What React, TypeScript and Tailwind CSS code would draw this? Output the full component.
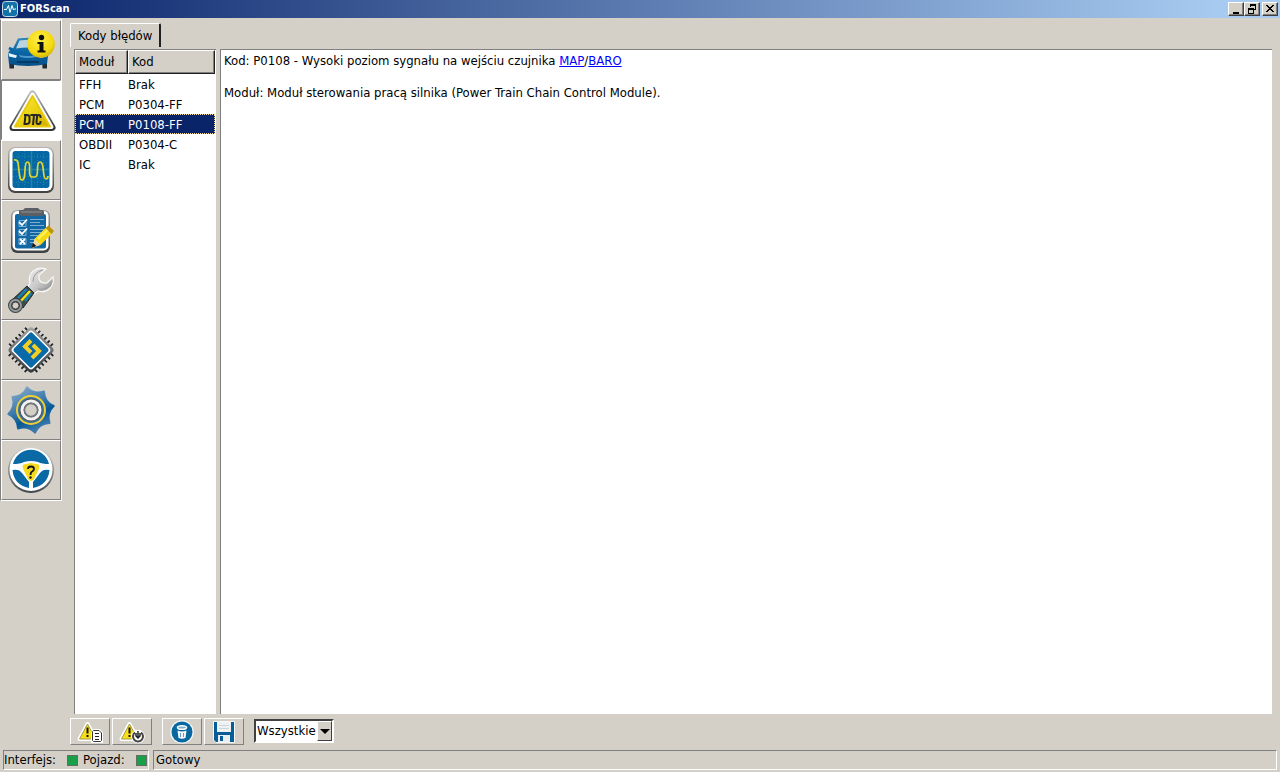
import { useState } from 'react';
import type { ReactNode } from 'react';

function CarIcon() {
  return (
    <svg viewBox="0 0 48 48" className="h-12 w-12 overflow-visible" aria-hidden="true">
      <defs>
        <linearGradient id="carBody" x1="0" y1="0" x2="0" y2="1">
          <stop offset="0" stopColor="#2f86bb" />
          <stop offset="0.5" stopColor="#0a66a6" />
          <stop offset="1" stopColor="#064f86" />
        </linearGradient>
        <radialGradient id="infoDisc" cx="0.45" cy="0.35" r="0.7">
          <stop offset="0" stopColor="#fff04a" />
          <stop offset="0.7" stopColor="#f4d80c" />
          <stop offset="1" stopColor="#c9ab06" />
        </radialGradient>
      </defs>
      <path d="M2 34h5v8.500h-4.500zM35 34h5v8.500h-4.500z" fill="#252b32" />
      <path d="M11 12.500Q22 11 33 12.500L37 23Q41 25 41 30L40 38Q21 42 2 38L1 29Q1 24 6 22.500Z" fill="url(#carBody)" />
      <path d="M12.500 14.500Q22 13 31 14.500L34 22.500Q21 20.500 9 22.500Z" fill="#bcd3e0" />
      <path d="M1.500 27L10 29.500L9 32L2 30.500ZM40.500 27L32 29.500L33 32L40 30.500Z" fill="#e9f4f8" />
      <path d="M12 29Q21 31 30 29L29 31Q21 33 13 31Z" fill="#4b9bcb" />
      <path d="M10 36H32" stroke="#043a66" strokeWidth="2" />
      <path d="M2 22L6 24" stroke="#0a66a6" strokeWidth="3" />
      <circle cx="34" cy="18" r="13.800" fill="url(#infoDisc)" />
      <circle cx="34.500" cy="11.500" r="2.700" fill="#111" />
      <path d="M30.500 16H36.500V24.500H38.500V26.500H30.500V24.500H32.500V18H30.500Z" fill="#111" />
    </svg>
  );
}

function DtcIcon() {
  return (
    <svg viewBox="0 0 48 48" className="h-12 w-12 overflow-visible" aria-hidden="true">
      <defs>
        <linearGradient id="dtcFrame" x1="0" y1="0" x2="0" y2="1">
          <stop offset="0" stopColor="#bbbbbb" />
          <stop offset="1" stopColor="#333333" />
        </linearGradient>
        <linearGradient id="dtcFill" x1="0" y1="0" x2="1" y2="1">
          <stop offset="0" stopColor="#ffed35" />
          <stop offset="0.55" stopColor="#ead012" />
          <stop offset="1" stopColor="#d2aa00" />
        </linearGradient>
      </defs>
      <path d="M25.500 8L45 41.500H6Z" fill="url(#dtcFrame)" stroke="url(#dtcFrame)" strokeWidth="7" strokeLinejoin="round" />
      <path d="M25.500 8.500L44.500 41H6.500Z" fill="#fff" stroke="#fff" strokeWidth="4" strokeLinejoin="round" />
      <path d="M25.500 10L43 40.500H8Z" fill="url(#dtcFill)" stroke="#e8ca0b" strokeWidth="2" strokeLinejoin="round" />
      <g fill="none" stroke="#252525" strokeWidth="2">
        <path d="M17 29H19.500Q22.500 29 22.500 31V36Q22 38 19.500 38H16.500M18.500 29L17.500 38M23.500 29H30M27 29L26 39M33.500 32V31Q33.500 29 31.500 29Q30 29 30 31L29.500 36Q29.500 38 31 38H31.500Q33.500 38 33.500 36V35" />
      </g>
    </svg>
  );
}

function ScopeIcon() {
  return (
    <svg viewBox="0 0 48 48" className="h-12 w-12 overflow-visible" aria-hidden="true">
      <defs>
        <linearGradient id="scopeEdge" x1="0" y1="0" x2="0" y2="1">
          <stop offset="0" stopColor="#b2b2b2" />
          <stop offset="1" stopColor="#414141" />
        </linearGradient>
      </defs>
      <rect x="1" y="1" width="46" height="46" rx="7" fill="url(#scopeEdge)" />
      <rect x="2.500" y="2" width="43" height="43" rx="6" fill="#fff" />
      <rect x="5.500" y="5" width="37" height="37" rx="3" fill="#0568a4" />
      <g stroke="#2286a5" strokeWidth="1" strokeDasharray="1 2">
        <path d="M6 10.500H42M6 16.500H42M6 30.500H42M6 36.500H42M11.500 5V42M17.500 5V42M30.500 5V42M36.500 5V42" />
      </g>
      <path d="M24.500 5V42M6 23.500H42" stroke="#2585a1" strokeWidth="1.500" />
      <path d="M7 14C12 13 11 18 12 25S13 34 15 34C20 34 16 16 20.500 16C25 16 20 31 25 31H28C33 31 28 16 33 16S35 33 39 33Q41 33 41 30" fill="none" stroke="#e2d531" strokeWidth="1.700" />
    </svg>
  );
}

function ChecklistIcon() {
  return (
    <svg viewBox="0 0 48 48" className="h-12 w-12 overflow-visible" aria-hidden="true">
      <defs>
        <linearGradient id="boardEdge" x1="0" y1="0" x2="0" y2="1">
          <stop offset="0" stopColor="#a1a1a1" />
          <stop offset="1" stopColor="#3b4044" />
        </linearGradient>
      </defs>
      <rect x="4" y="4" width="39" height="43" rx="6" fill="url(#boardEdge)" />
      <rect x="5.500" y="5" width="36" height="39.500" rx="5" fill="#fff" />
      <rect x="8" y="8" width="31" height="34.500" rx="2" fill="#1168a4" />
      <path d="M12 8V5Q12 4 14 4H16L18 2H31L33 4H35Q37 4 37 6V8Q37 10 35 10H14Q12 10 12 8Z" fill="#5c6064" />
      <path d="M14 6H35" stroke="#909496" strokeWidth="1" />
      <g fill="none" stroke="#7fb0d2" strokeWidth="1">
        <path d="M12 14.500H19V20.500H12ZM12 23.500H19V29.500H12ZM12 32.500H19V38.500H12ZM23 13.500H37M23 16.500H33M23 19.500H37M23 23.500H37M23 26.500H35M23 29.500H33M23 33.500H30M23 36.500H28" />
      </g>
      <path d="M12 16L15 19L20 13.500M12 25L15 28L20 22.500M13 33L18 38M18 33L13 38" fill="none" stroke="#fff" strokeWidth="1.800" />
      <path d="M25 42L28 33L39 22L44 28L33 38Z" fill="#fff" />
      <path d="M27.500 33L38.500 22L44.500 28L33.500 39Z" fill="#f5d914" />
      <path d="M31 33L40.500 24" stroke="#fff461" strokeWidth="2" />
      <path d="M38.500 22L41.500 19.500L47 25L44.500 28Z" fill="#bf9300" />
      <path d="M25 42L27.500 33L33.500 39Z" fill="#f1d7a1" />
      <path d="M24.500 42L26 37L29.500 40Z" fill="#181818" />
    </svg>
  );
}

function WrenchIcon() {
  return (
    <svg viewBox="0 0 48 48" className="h-12 w-12 overflow-visible" aria-hidden="true">
      <defs>
        <linearGradient id="steel" x1="0" y1="0" x2="1" y2="1">
          <stop offset="0" stopColor="#f0f0f0" />
          <stop offset="0.5" stopColor="#c9c9c9" />
          <stop offset="1" stopColor="#858585" />
        </linearGradient>
      </defs>
      <path d="M39 3C29 0 20 7 23 17L20 23L26 29L31 25C40 28 48 20 46 11L40 17Q31 18 32 9Z" fill="url(#steel)" stroke="#f8f8f8" strokeWidth="1.200" />
      <path d="M36 4Q26 6 26 16M31 23Q41 25 45 15" fill="none" stroke="#9b9b9b" strokeWidth="1" />
      <path d="M20 20L27 27L16 42L5 34Z" fill="#394a50" stroke="#222b2f" strokeWidth="1" strokeLinejoin="round" />
      <path d="M19.500 23L11 32M24 27L18 35" stroke="#1682b2" strokeWidth="2.500" />
      <path d="M23 25L13 36" stroke="#f2dd16" strokeWidth="2.500" />
      <circle cx="8.500" cy="39.500" r="7.500" fill="#3f4446" />
      <circle cx="8.500" cy="39.500" r="5.500" fill="none" stroke="#949b9c" strokeWidth="2" />
      <circle cx="8.500" cy="39.500" r="3.500" fill="#d4d0c8" stroke="#444" strokeWidth="1" />
    </svg>
  );
}

function ChipIcon() {
  return (
    <svg viewBox="0 0 48 48" className="h-12 w-12 overflow-visible" aria-hidden="true">
      <defs>
        <linearGradient id="chipEdge" x1="0" y1="0" x2="1" y2="1">
          <stop offset="0" stopColor="#a9a9a9" />
          <stop offset="1" stopColor="#303438" />
        </linearGradient>
      </defs>
      <g transform="rotate(45 24 24)">
        <path d="M12.500 4V44M17 4V44M21.500 4V44M26 4V44M30.500 4V44M35 4V44M4 12.500H44M4 17H44M4 21.500H44M4 26H44M4 30.500H44M4 35H44" stroke="#eeeeea" strokeWidth="3" />
        <path d="M12.500 4V44M17 4V44M21.500 4V44M26 4V44M30.500 4V44M35 4V44M4 12.500H44M4 17H44M4 21.500H44M4 26H44M4 30.500H44M4 35H44" stroke="#292929" strokeWidth="2" />
        <rect x="7" y="7" width="34" height="34" rx="4" fill="url(#chipEdge)" />
        <rect x="9.500" y="9.500" width="29" height="29" rx="3" fill="#fff" />
        <rect x="11" y="11" width="26" height="26" rx="2" fill="#096aa7" />
      </g>
      <path d="M24 14.500L18 20.500L24 26.500M26 19L32 25L25 32" fill="none" stroke="#f3cf25" strokeWidth="4" />
    </svg>
  );
}

function GearIcon() {
  return (
    <svg viewBox="0 0 48 48" className="h-12 w-12 overflow-visible" aria-hidden="true">
      <defs>
        <linearGradient id="gearFill" x1="0" y1="0" x2="0.300" y2="1">
          <stop offset="0" stopColor="#8db0cf" />
          <stop offset="0.5" stopColor="#3a7aab" />
          <stop offset="0.750" stopColor="#075897" />
          <stop offset="1" stopColor="#3a78aa" />
        </linearGradient>
      </defs>
      <g transform="rotate(-10 24 24)">
        <path
          d="M24 1Q29.500 9.500 40 8Q38.500 18.500 47 24Q38.500 29.500 40 40Q29.500 38.500 24 47Q18.500 38.500 8 40Q9.500 29.500 1 24Q9.500 18.500 8 8Q18.500 9.500 24 1Z"
          fill="url(#gearFill)"
          stroke="url(#gearFill)"
          strokeWidth="2"
          strokeLinejoin="round"
        />
      </g>
      <circle cx="24" cy="24" r="14" fill="#38739e" stroke="#efcf34" strokeWidth="2" />
      <circle cx="24" cy="24" r="11.500" fill="#555b5f" />
      <circle cx="24" cy="24" r="9" fill="none" stroke="#f2f2f2" strokeWidth="3" />
      <circle cx="24" cy="24" r="6.500" fill="#d4d0c8" stroke="#70777b" strokeWidth="1.500" />
    </svg>
  );
}

function WheelIcon() {
  return (
    <svg viewBox="0 0 48 48" className="h-12 w-12 overflow-visible" aria-hidden="true">
      <defs>
        <linearGradient id="wheelEdge" x1="0" y1="0" x2="0" y2="1">
          <stop offset="0" stopColor="#d6d6d6" />
          <stop offset="1" stopColor="#41464a" />
        </linearGradient>
      </defs>
      <circle cx="24" cy="24" r="23" fill="url(#wheelEdge)" />
      <circle cx="24" cy="23.500" r="21.500" fill="#fff" />
      <path d="M6 18A18.500 18.500 0 0 1 42 18Q35 18 31 16Q24 14 17 16Q13 18 6 18Z" fill="#0b6aa6" />
      <path d="M5.500 24Q12 22.500 15 27L22 36V42Q7 39 5.500 24ZM42.500 24Q36 22.500 33 27L26 36V42Q41 39 42.500 24Z" fill="#0869a5" />
      <path d="M16 18Q24 15 32 18Q34 20 32 24L27 34Q24 37 21 34L16 24Q14 20 16 18Z" fill="#f5db20" stroke="#fff" strokeWidth="1" />
      <path d="M21 23Q21 20.500 24 20.500Q27 20.500 27 23Q27 24.500 24.500 26Q23.500 27 23.500 29" fill="none" stroke="#151515" strokeWidth="1.800" />
      <circle cx="23.500" cy="31.500" r="1.200" fill="#151515" />
    </svg>
  );
}

function WarningShape() {
  return (
    <>
      <path d="M9.500 3L17.500 18H1.500Z" fill="#f5df24" stroke="#fff" strokeWidth="4" strokeLinejoin="round" />
      <path d="M9.500 3L17.500 18H1.500Z" fill="#f8df18" stroke="#a39a45" strokeWidth="1" strokeLinejoin="round" />
      <path d="M9.500 6.500V12.500M9.500 14V16" stroke="#111" strokeWidth="2" />
    </>
  );
}

function WarningListIcon() {
  return (
    <svg viewBox="0 0 24 22" className="h-[22px] w-6 overflow-visible" aria-hidden="true">
      <WarningShape />
      <path d="M16.500 9.500H21L23.500 12V20.500H14.500V11.500Z" fill="#fff" stroke="#fff" strokeWidth="3" />
      <path d="M15.500 9.500H21L23.500 12V19.500L22.500 20.500H15.500L14.500 19.500V10.500Z" fill="#fff" stroke="#333" />
      <path d="M17 12.500H21M17 15.500H21M17 18.500H21" fill="none" stroke="#222" />
    </svg>
  );
}

function WarningResetIcon() {
  return (
    <svg viewBox="0 0 24 22" className="h-[22px] w-6 overflow-visible" aria-hidden="true">
      <WarningShape />
      <circle cx="18" cy="15.500" r="6.800" fill="#fff" />
      <path d="M15 11.500A5 5 0 1 0 21 11.500" fill="none" stroke="#444" strokeWidth="2" />
      <path d="M18 10V17M16 12V15L18 17L20 15V12" fill="none" stroke="#222" strokeWidth="1.500" />
    </svg>
  );
}

function TrashIcon() {
  return (
    <svg viewBox="0 0 24 24" className="h-6 w-6 overflow-visible" aria-hidden="true">
      <circle cx="12" cy="12" r="11.800" fill="#f0f4f6" />
      <circle cx="12" cy="12" r="10.500" fill="#09679f" />
      <ellipse cx="12" cy="7.500" rx="4.500" ry="1.800" fill="#7fb0cf" stroke="#fff" strokeWidth="1.500" />
      <path d="M7.500 10.500Q12 12.500 16.500 10.500L15.500 18Q12 19.500 8.500 18Z" fill="#f5f9fb" />
      <path d="M10.500 13V17M13.500 13V17" stroke="#5c9bc0" strokeWidth="1" />
    </svg>
  );
}

function SaveIcon() {
  return (
    <svg viewBox="0 0 22 22" className="h-[22px] w-[22px] overflow-visible" aria-hidden="true">
      <path d="M0.500 0.500H21.500V21.500H3L0.500 19Z" fill="#075d98" stroke="#f4f6f7" strokeWidth="1" />
      <path d="M4 1H18V11H4Z" fill="#eef2f3" />
      <path d="M6 4.500H16M6 7.500H16" stroke="#ced6da" />
      <path d="M5 14H17V21H5Z" fill="#e9eff1" />
      <path d="M7 15H10V20H7Z" fill="#075d98" />
    </svg>
  );
}

const tools: { label: string; icon: ReactNode }[] = [
  { label: 'Informacje o pojeździe', icon: <CarIcon /> },
  { label: 'Kody błędów', icon: <DtcIcon /> },
  { label: 'Wykresy', icon: <ScopeIcon /> },
  { label: 'Testy', icon: <ChecklistIcon /> },
  { label: 'Serwis', icon: <WrenchIcon /> },
  { label: 'Konfiguracja', icon: <ChipIcon /> },
  { label: 'Ustawienia', icon: <GearIcon /> },
  { label: 'Pomoc', icon: <WheelIcon /> },
];

const codes = [
  ['FFH', 'Brak'],
  ['PCM', 'P0304-FF'],
  ['PCM', 'P0108-FF'],
  ['OBDII', 'P0304-C'],
  ['IC', 'Brak'],
];

function WindowButton({ label, children }: { label: string; children: ReactNode }) {
  return (
    <button
      type="button"
      aria-label={label}
      className="flex h-[14px] w-4 items-center justify-center border border-t-white border-r-[#404040] border-b-[#404040] border-l-white bg-[#d4d0c8] shadow-[inset_-1px_-1px_#808080]"
    >
      <svg viewBox="0 0 12 10" className="h-[10px] w-3" shapeRendering="crispEdges" aria-hidden="true">
        {children}
      </svg>
    </button>
  );
}

function ToolbarButton({ label, children }: { label: string; children: ReactNode }) {
  return (
    <button
      type="button"
      aria-label={label}
      className="flex h-[27px] w-10 items-center justify-center border border-t-white border-r-[#808080] border-b-[#808080] border-l-white"
    >
      {children}
    </button>
  );
}

export default function App() {
  const [activeTool, setActiveTool] = useState(1);
  const [selected, setSelected] = useState(2);

  return (
    <div className="flex h-screen flex-col overflow-hidden bg-[#d4d0c8] font-['DejaVu_Sans_Condensed','Noto_Sans',sans-serif] text-[13px] leading-4 text-black">
      <header className="flex h-[18px] shrink-0 items-center bg-linear-to-r/srgb from-[#0a246a] to-[#a6caf0] to-95% pr-[2px] pl-[2px]">
        <svg viewBox="0 0 16 16" className="h-4 w-4" aria-hidden="true">
          <rect x="0.500" y="0.500" width="15" height="15" rx="3" fill="#1273a9" stroke="#c5dce8" />
          <path d="M2 8.500H4.500L6.500 4.500L8 11.500L10 4.500L11.500 9L12.500 8H14" fill="none" stroke="#fff" strokeWidth="1" />
        </svg>
        <h1 className="ml-[2px] text-[11px] font-bold text-white">FORScan</h1>
        <div className="ml-auto flex">
          <WindowButton label="Minimalizuj"><path d="M3 8H9V10H3Z" /></WindowButton>
          <WindowButton label="Przywróć">
            <path d="M4 0H10V6H8V5H9V2H5V3H4ZM2 4H8V10H2ZM3 6V9H7V6Z" fillRule="evenodd" />
          </WindowButton>
          <div className="w-[2px]" />
          <WindowButton label="Zamknij">
            <path d="M2 1H4V2H5V3H7V2H8V1H10V2H9V3H8V4H7V5H8V6H9V7H10V8H8V7H7V6H5V7H4V8H2V7H3V6H4V5H5V4H4V3H3V2H2Z" />
          </WindowButton>
        </div>
      </header>

      <div className="flex min-h-0 flex-1">
        <nav className="w-[62px] shrink-0 pt-[1px]">
          <div className="border border-t-white border-r-white border-b-white border-l-[#808080]">
            {tools.map((tool, index) => (
              <button
                key={tool.label}
                type="button"
                aria-label={tool.label}
                aria-pressed={activeTool === index}
                onClick={() => setActiveTool(index)}
                className={
                  activeTool === index
                    ? 'flex h-[60px] w-full items-center justify-center border border-t-[#808080] border-r-white border-b-white border-l-[#808080] bg-white'
                    : 'flex h-[60px] w-full items-center justify-center border border-t-white border-r-[#808080] border-b-[#808080] border-l-white'
                }
              >
                {tool.icon}
              </button>
            ))}
          </div>
        </nav>

        <main className="flex min-w-0 flex-1 flex-col pr-2 pl-2">
          <div role="tablist" className="flex pt-[5px]">
            <button
              type="button"
              role="tab"
              aria-selected="true"
              className="h-6 rounded-t-[2px] border-t border-r-2 border-l border-t-white border-r-[#202020] border-l-white px-[7px]"
            >
              Kody błędów
            </button>
          </div>

          <div className="flex min-h-0 flex-1 gap-1 pt-[2px] pl-1">
            <section className="w-[142px] shrink-0 border-t border-l border-[#808080] bg-white">
              <table className="w-[140px] table-fixed border-separate border-spacing-0">
                <colgroup>
                  <col className="w-[53px]" />
                  <col />
                </colgroup>
                <thead>
                  <tr>
                    {['Moduł', 'Kod'].map((heading) => (
                      <th
                        key={heading}
                        scope="col"
                        className="h-6 border border-t-white border-r-[#202020] border-b-[#202020] border-l-white bg-[#d4d0c8] px-[3px] text-left font-normal shadow-[inset_-1px_-1px_#808080]"
                      >
                        {heading}
                      </th>
                    ))}
                  </tr>
                </thead>
                <tbody>
                  {codes.map(([module, code], index) => (
                    <tr
                      key={`${module}-${code}`}
                      onClick={() => setSelected(index)}
                      className={selected === index ? 'bg-[#0a246a] text-white outline-1 -outline-offset-1 outline-dotted outline-[#f5db95]' : ''}
                    >
                      <td className="h-5 px-1 pt-[2px]">{module}</td>
                      <td className="h-5 pt-[2px]">{code}</td>
                    </tr>
                  ))}
                </tbody>
              </table>
            </section>

            <article className="min-w-0 flex-1 border-t border-l border-[#808080] bg-white px-[3px] pt-[3px]">
              <p>
                Kod: P0108 - Wysoki poziom sygnału na wejściu czujnika{' '}
                <a href="#map" className="text-[#0000ff] underline">MAP</a>/
                <a href="#baro" className="text-[#0000ff] underline">BARO</a>
              </p>
              <p className="mt-4">Moduł: Moduł sterowania pracą silnika (Power Train Chain Control Module).</p>
            </article>
          </div>

          <div className="flex h-[34px] shrink-0 items-start pt-1">
            <div className="flex gap-[2px]">
              <ToolbarButton label="Odczytaj kody"><WarningListIcon /></ToolbarButton>
              <ToolbarButton label="Resetuj kody"><WarningResetIcon /></ToolbarButton>
            </div>
            <div className="ml-[10px] flex gap-[2px]">
              <ToolbarButton label="Usuń"><TrashIcon /></ToolbarButton>
              <ToolbarButton label="Zapisz"><SaveIcon /></ToolbarButton>
            </div>
            <div className="relative mt-[1px] ml-[10px]">
              <select
                aria-label="Filtr kodów"
                className="block h-6 w-20 appearance-none rounded-none border-2 border-t-[#404040] border-r-white border-b-white border-l-[#404040] bg-white pl-[1px] outline-none"
              >
                <option>Wszystkie</option>
              </select>
              <span className="pointer-events-none absolute top-[2px] right-[2px] flex h-5 w-[15px] items-center justify-center border border-t-white border-r-[#404040] border-b-[#404040] border-l-white bg-[#d4d0c8]">
                <svg viewBox="0 0 10 5" className="h-[5px] w-[10px]" aria-hidden="true"><path d="M0 0H10L5 5Z" /></svg>
              </span>
            </div>
          </div>
        </main>
      </div>

      <footer className="flex h-6 shrink-0 gap-1 px-[3px] pt-[2px] pb-[2px]">
        <div className="flex w-[146px] items-center border border-t-[#808080] border-r-white border-b-white border-l-[#808080]">
          <span className="w-[63px]">Interfejs:</span>
          <span className="h-[11px] w-[11px] border border-[#607060] bg-[#18a048]" />
          <span className="ml-[5px] w-[53px]">Pojazd:</span>
          <span className="h-[11px] w-[11px] border border-[#607060] bg-[#18a048]" />
        </div>
        <div className="flex flex-1 items-center border border-t-[#808080] border-r-white border-b-white border-l-[#808080] pl-[2px]">Gotowy</div>
      </footer>
    </div>
  );
}
